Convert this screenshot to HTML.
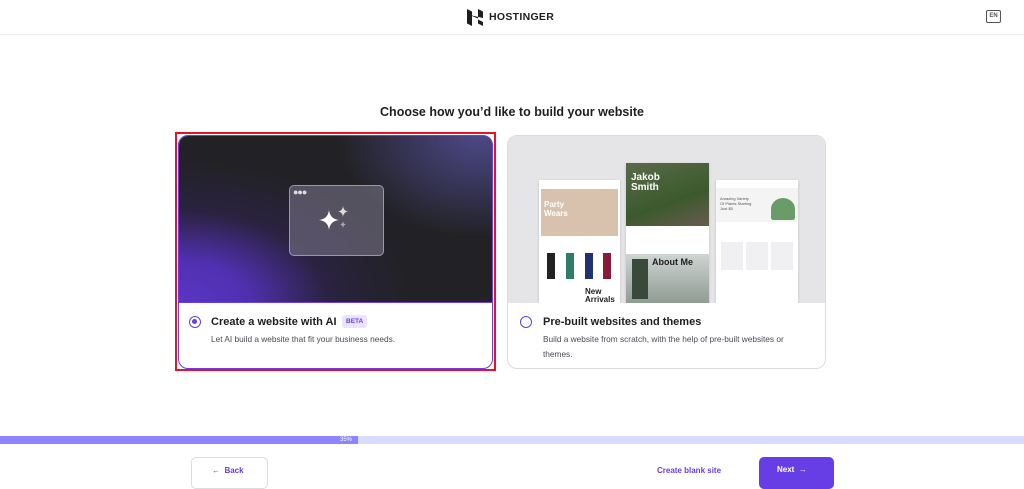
<!DOCTYPE html><html><head><meta charset="utf-8"><style>
*{margin:0;padding:0;box-sizing:border-box}
body{width:1024px;height:484px;overflow:hidden;background:#fff;font-family:"Liberation Sans",sans-serif;color:#1d1e20;position:relative}
.hdr{position:absolute;left:0;top:0;width:1024px;height:35px;border-bottom:1px solid #ececec}
.abs{position:absolute}
.card{position:absolute;border-radius:10px;overflow:hidden;background:#fff}
.t{font-weight:bold;font-size:11px}
.d{font-size:8px;color:#4a4a55;line-height:15px}
.radio{position:absolute;width:12px;height:12px;border-radius:50%;border:1.5px solid #673de6}
.mock{position:absolute;background:#fff;box-shadow:0 1px 3px rgba(0,0,0,.15)}
</style></head><body>
<div class="hdr">
 <svg class="abs" style="left:467px;top:9px" width="16" height="17" viewBox="0 0 16 17"><path d="M0 0l5 2.5v4.5l6 2.5V0l5 2.5v6.5L5 6.5V17l-5-2.5zM11 10.5l5 2.5v4L11 14.5z" fill="#1d1e20"/></svg>
 <div class="abs" style="left:489px;top:11px;font-weight:bold;font-size:10.5px;letter-spacing:.3px">HOSTINGER</div>
 <div class="abs" style="left:986px;top:10px;width:15px;height:13px;border:1.5px solid #555;border-radius:2px;font-size:6px;font-weight:bold;text-align:center;line-height:10px;color:#555">EN</div>
</div>
<div class="abs" style="left:0;width:1024px;top:105px;text-align:center;font-weight:bold;font-size:12.5px">Choose how you’d like to build your website</div>

<div class="abs" style="left:175px;top:132px;width:321px;height:239px;border:2px solid #e8102a"></div>
<div class="card" style="left:178px;top:135px;width:315px;height:234px;border:1px solid #673de6">
 <div class="abs" style="left:0;top:0;width:315px;height:167px;background:radial-gradient(ellipse 230px 140px at 0% 100%,#5a36c4 0%,#5030b0 30%,rgba(50,35,90,.5) 65%,rgba(40,30,70,0) 100%),radial-gradient(ellipse 140px 100px at 95% 0%,#4d4888 0%,rgba(40,40,60,0) 100%),#222226;border-bottom:1px solid #673de6"></div>
 <div class="abs" style="left:110px;top:49px;width:95px;height:71px;border-radius:5px;background:rgba(120,115,135,.6);border:1px solid rgba(200,200,210,.6)"></div>
 <div class="abs" style="left:114px;top:51px;color:#ddd;font-size:9px;letter-spacing:-1px">●●●</div>
 <svg class="abs" style="left:140px;top:70px" width="35" height="32" viewBox="0 0 35 32"><path d="M10 4Q11 13 20 14Q11 15 10 24Q9 15 0 14Q9 13 10 4Z" fill="#fff"/><path d="M24 0Q24.5 5 29 5.5Q24.5 6 24 11Q23.5 6 19 5.5Q23.5 5 24 0Z" fill="#ddd"/><path d="M24 15Q24.3 18 27 18.5Q24.3 19 24 22Q23.7 19 21 18.5Q23.7 18 24 15Z" fill="#aaa"/></svg>
 <div class="radio" style="left:10px;top:180px;padding:2px"><div style="width:5px;height:5px;border-radius:50%;background:#673de6"></div></div>
 <div class="abs t" style="left:32px;top:180px">Create a website with AI</div>
 <div class="abs" style="left:163px;top:179px;background:#ebe4ff;color:#673de6;font-size:6.5px;font-weight:bold;padding:3px 4px;border-radius:3px">BETA</div>
 <div class="abs d" style="left:32px;top:196px;font-size:8.3px">Let AI build a website that fit your business needs.</div>
</div>

<div class="card" style="left:507px;top:135px;width:319px;height:234px;border:1px solid #dadce0">
 <div class="abs" style="left:0;top:0;width:319px;height:167px;background:#e5e5e7;overflow:hidden">
  <div class="mock" style="left:31px;top:44px;width:81px;height:130px">
   <div class="abs" style="left:2px;top:9px;width:77px;height:47px;background:#d9c2ad"></div>
   <div class="abs" style="left:5px;top:20px;color:#fff;font-size:8px;font-weight:bold">Party<br>Wears</div>
   <div class="abs" style="left:8px;top:73px;width:8px;height:26px;background:#222"></div><div class="abs" style="left:27px;top:73px;width:8px;height:26px;background:#2f7c6b"></div><div class="abs" style="left:46px;top:73px;width:8px;height:26px;background:#223070"></div><div class="abs" style="left:64px;top:73px;width:8px;height:26px;background:#8a1a3a"></div>
   <div class="abs" style="left:46px;top:108px;font-size:8px;font-weight:bold;line-height:8px">New<br>Arrivals</div>
  </div>
  <div class="mock" style="left:118px;top:27px;width:83px;height:140px">
   <div class="abs" style="left:0;top:0;width:83px;height:63px;background:linear-gradient(160deg,#5a6a4a,#3b5a2c 60%,#6a5a50)"></div>
   <div class="abs" style="left:5px;top:10px;color:#fff;font-size:10px;font-weight:bold;line-height:10px">Jakob<br>Smith</div>
   <div class="abs" style="left:0;top:91px;width:83px;height:50px;background:linear-gradient(#cfd5d2,#8e9a92)"></div>
   <div class="abs" style="left:26px;top:94px;font-size:9px;font-weight:bold">About Me</div>
   <div class="abs" style="left:6px;top:96px;width:16px;height:40px;background:#3a4a3a"></div>
  </div>
  <div class="mock" style="left:208px;top:44px;width:82px;height:130px">
   <div class="abs" style="left:0;top:8px;width:82px;height:34px;background:#f4f4f4"></div>
   <div class="abs" style="left:4px;top:16px;font-size:4px;color:#555;line-height:5px">Amazing Variety<br>Of Plants Starting<br>Just $5</div>
   <div class="abs" style="left:55px;top:18px;width:24px;height:22px;background:#6a9c6a;border-radius:50% 50% 10% 10%"></div>
   <div class="abs" style="left:5px;top:62px;width:22px;height:28px;background:#f0f0f3"></div><div class="abs" style="left:30px;top:62px;width:22px;height:28px;background:#f0f0f3"></div><div class="abs" style="left:55px;top:62px;width:22px;height:28px;background:#f0f0f3"></div>
  </div>
 </div>
 <div class="radio" style="left:12px;top:180px"></div>
 <div class="abs t" style="left:35px;top:180px">Pre-built websites and themes</div>
 <div class="abs d" style="left:35px;top:196px;width:260px;font-size:8.3px">Build a website from scratch, with the help of pre-built websites or themes.</div>
</div>

<div class="abs" style="left:0;top:436px;width:1024px;height:8px;background:#d5dcfd"></div>
<div class="abs" style="left:0;top:436px;width:358px;height:8px;background:#8c85ff"></div>
<div class="abs" style="left:340px;top:436px;font-size:6px;color:#fff;line-height:8px">35%</div>
<div class="abs" style="left:191px;top:457px;width:77px;height:32px;border:1px solid #dadce0;border-radius:5px;color:#673de6;font-size:8px;font-weight:bold;line-height:26px;padding-left:20px">← &nbsp;Back</div>
<div class="abs" style="left:657px;top:466px;font-size:8px;font-weight:bold;color:#673de6">Create blank site</div>
<div class="abs" style="left:759px;top:457px;width:75px;height:32px;background:#673de6;border-radius:5px;color:#fff;font-size:8px;font-weight:bold;line-height:26px;padding-left:18px">Next &nbsp;→</div>
</body></html>
